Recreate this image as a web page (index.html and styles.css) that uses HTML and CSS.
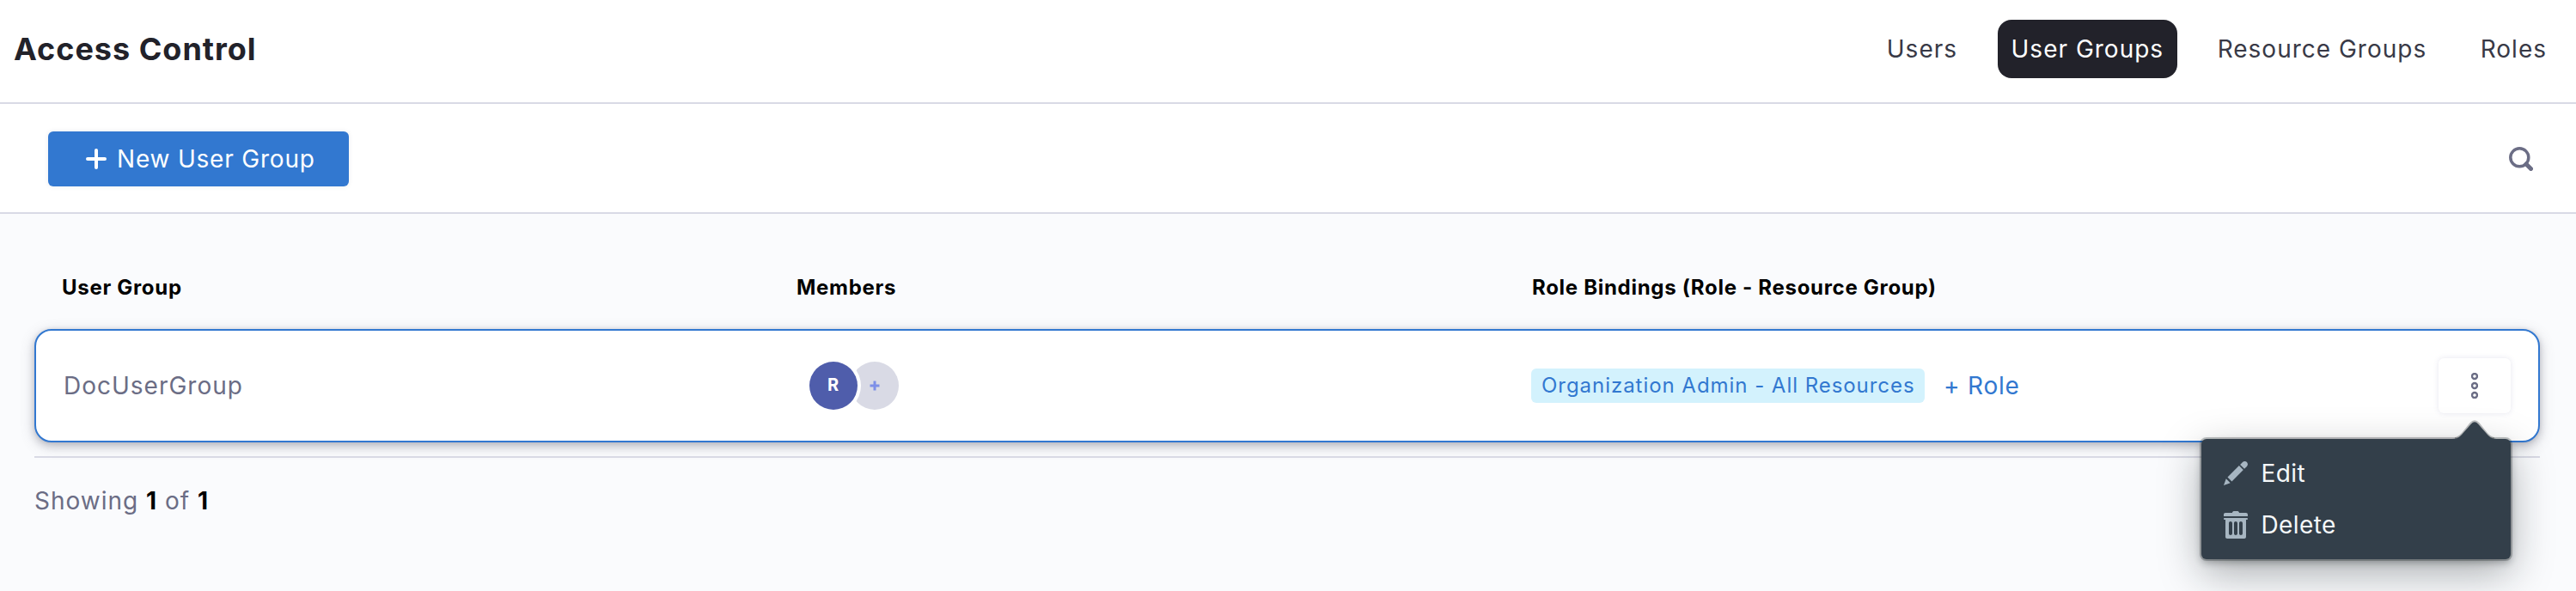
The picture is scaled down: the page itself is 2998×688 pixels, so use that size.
FILE: index.html
```html
<!DOCTYPE html>
<html lang="en">
<head>
<meta charset="utf-8">
<title>Access Control</title>
<link rel="stylesheet" href="styles.css">
</head>
<body>
<header class="header">
  <h1 class="title">Access Control</h1>
  <nav class="tabs">
    <a class="tab">Users</a>
    <a class="tab tab-active">User Groups</a>
    <a class="tab">Resource Groups</a>
    <a class="tab">Roles</a>
  </nav>
</header>
<section class="toolbar">
  <button class="new-button">
    <svg class="plus-icon" viewBox="0 0 24 24"><path d="M12 2v20M2 12h20"/></svg>
    <span>New User Group</span>
  </button>
  <svg class="search-icon" viewBox="0 0 28 28"><circle cx="12.3" cy="12.3" r="10.5"/><path class="handle" d="M20 20l5.5 5.5"/></svg>
</section>
<main class="content">
  <div class="table-head">
    <span>User Group</span>
    <span>Members</span>
    <span>Role Bindings (Role - Resource Group)</span>
  </div>
  <div class="row">
    <div class="cell-name">DocUserGroup</div>
    <div class="cell-members">
      <span class="avatar">R</span>
      <span class="avatar avatar-add"><svg viewBox="0 0 12 12"><path d="M6 .5v11M.5 6h11"/></svg></span>
    </div>
    <div class="cell-roles">
      <span class="badge">Organization Admin - All Resources</span>
      <a class="add-role">+ Role</a>
    </div>
    <div class="menu-anchor">
      <button class="more-button">
        <svg viewBox="0 0 8 30"><circle cx="4" cy="4" r="3"/><circle cx="4" cy="15" r="3"/><circle cx="4" cy="26" r="3"/></svg>
      </button>
      <div class="menu">
        <svg class="menu-arrow" viewBox="0 0 52 22"><path class="arrow-edge" d="M3 20C7 20 9 18 12 15L22 2.5Q26-2 30 2.5L40 15C43 18 45 20 49 20"/><path class="arrow-fill" d="M0 20C6 20 8 18 11 15L22 2.5Q26-2 30 2.5L41 15C44 18 46 20 52 20V22H0Z"/></svg>
        <a class="menu-item">
          <svg viewBox="0 0 16 16"><path d="M3.25 10.26l2.47 2.47 6.69-6.69-2.46-2.48-6.7 6.7zM.99 14.99l3.86-1.39-2.46-2.44L.99 14.99zm12.25-14c-.48 0-.92.2-1.24.51l-1.44 1.44 2.47 2.47 1.44-1.44c.32-.32.51-.75.51-1.24.01-.95-.77-1.74-1.74-1.74z"/></svg>
          <span>Edit</span>
        </a>
        <a class="menu-item">
          <svg viewBox="0 0 16 16"><path fill-rule="evenodd" d="M14.49 3.99h-13c-.28 0-.5.22-.5.5s.22.5.5.5h.5v10c0 .55.45 1 1 1h10c.55 0 1-.45 1-1v-10h.5c.28 0 .5-.22.5-.5s-.22-.5-.5-.5zm-8.5 9c0 .55-.45 1-1 1s-1-.45-1-1v-6c0-.55.45-1 1-1s1 .45 1 1v6zm3 0c0 .55-.45 1-1 1s-1-.45-1-1v-6c0-.55.45-1 1-1s1 .45 1 1v6zm3 0c0 .55-.45 1-1 1s-1-.45-1-1v-6c0-.55.45-1 1-1s1 .45 1 1v6zM13.99.99h-4c0-.55-.45-1-1-1h-2c-.55 0-1 .45-1 1h-4c-.55 0-1 .45-1 1v1h14v-1c0-.55-.45-1-1-1z"/></svg>
          <span>Delete</span>
        </a>
      </div>
    </div>
  </div>
  <div class="footer">Showing <b>1</b> of <b>1</b></div>
</main>
</body>
</html>
```

FILE: styles.css
```css
* { box-sizing: border-box; }
body {
  margin: 0;
  height: 688px;
  overflow: hidden;
  background: #fafbfd;
  font-family: Inter, "Liberation Sans", sans-serif;
  font-size: 28px;
  letter-spacing: 1px;
  color: #6b6d85;
}
button { border: 0; padding: 0; font: inherit; letter-spacing: inherit; }
.header {
  display: flex;
  align-items: center;
  justify-content: space-between;
  height: 121px;
  padding: 0 18px 5px 16px;
  background: #fff;
  border-bottom: 2px solid #d9dae5;
}
.title { margin: 0; font-size: 36px; font-weight: 700; color: #22222a; }
.tabs { display: flex; gap: 30.5px; }
.tab {
  height: 68px;
  padding: 0 16px;
  line-height: 68px;
  border-radius: 16px;
  color: #383946;
}
.tab-active { background: #22222a; color: #fff; }
.toolbar {
  display: flex;
  align-items: center;
  justify-content: space-between;
  height: 128px;
  padding: 2px 50px 0 56px;
  background: #fff;
  border-bottom: 2px solid #d9dae5;
}
.new-button {
  display: flex;
  align-items: center;
  gap: 12px;
  width: 350px;
  height: 64px;
  padding-left: 44px;
  border-radius: 6px;
  background: #3278d0;
  color: #fff;
  letter-spacing: 0.8px;
  box-shadow: 0 0 6px rgba(40, 41, 61, 0.08);
}
.plus-icon { width: 24px; height: 24px; fill: none; stroke: #fff; stroke-width: 4; stroke-linecap: round; }
.search-icon { width: 28px; height: 28px; fill: none; stroke: #6b6d85; stroke-width: 3.5; }
.handle { stroke-width: 5; stroke-linecap: round; }
.content { padding: 0 42px 0 40px; }
.table-head {
  display: grid;
  grid-template-columns: 855px 856px 1fr;
  height: 134px;
  padding: 71px 0 0 32px;
  font-size: 24px;
  line-height: 30px;
  font-weight: 700;
  letter-spacing: 0.7px;
  color: #000;
}
.row {
  display: grid;
  grid-template-columns: 868px 840px 1fr 84px;
  align-items: center;
  height: 132px;
  padding: 0 32px;
  border: 2px solid #3278d0;
  border-radius: 20px;
  background: #fff;
  box-shadow: 0 0 4px rgba(40, 41, 61, 0.08), 0 4px 16px rgba(96, 97, 112, 0.3), 0 4px 8px rgba(40, 41, 61, 0.15);
}
.cell-members { display: flex; }
.avatar {
  position: relative;
  z-index: 1;
  width: 56px;
  height: 56px;
  border-radius: 50%;
  background: #4f5dab;
  box-shadow: 0 0 0 4px #fff;
  color: #fff;
  font-size: 20px;
  font-weight: 700;
  line-height: 54px;
  text-align: center;
}
.avatar-add {
  z-index: 0;
  display: grid;
  place-items: center;
  margin-left: -8px;
  background: #d9dae5;
  box-shadow: none;
}
.avatar-add svg { width: 12px; height: 12px; stroke: #7d8fe8; stroke-width: 3; }
.cell-roles { display: flex; align-items: center; gap: 22px; }
.badge {
  width: 458px;
  height: 40px;
  padding-left: 12px;
  border-radius: 6px;
  background: #d3f2fd;
  color: #3278d0;
  font-size: 24px;
  letter-spacing: 0.96px;
  line-height: 40px;
  white-space: nowrap;
}
.add-role { color: #3278d0; letter-spacing: 0.8px; white-space: nowrap; }
.menu-anchor { position: relative; }
.more-button {
  display: grid;
  place-items: center;
  width: 84px;
  height: 64px;
  border-radius: 6px;
  background: #fff;
  box-shadow: 0 0 6px rgba(80, 80, 140, 0.14);
}
.more-button svg { width: 8px; height: 30px; fill: none; stroke: #6b6d85; stroke-width: 2.4; }
.menu {
  position: absolute;
  top: 94px;
  right: 0;
  width: 360px;
  height: 140px;
  padding: 10px 24px;
  border-radius: 6px;
  background: #333f4a;
  box-shadow: 0 0 0 2px rgba(16, 22, 26, 0.25), 0 4px 8px rgba(16, 22, 26, 0.3), 0 16px 48px rgba(16, 22, 26, 0.34);
}
.menu-arrow { position: absolute; top: -20px; right: 16px; width: 52px; height: 22px; overflow: visible; }
.arrow-edge { fill: none; stroke: rgba(16, 22, 26, 0.28); stroke-width: 4; }
.arrow-fill { fill: #333f4a; }
.menu-item { display: flex; align-items: center; gap: 13.5px; height: 60px; letter-spacing: 0.4px; color: #f5f8fa; }
.menu-item svg { width: 32px; height: 32px; fill: #a7b6c2; }
.footer { margin-top: 16px; padding-top: 32px; border-top: 2px solid #d9dae5; line-height: 36px; }
.footer b { color: #000; font-weight: 700; }
```
